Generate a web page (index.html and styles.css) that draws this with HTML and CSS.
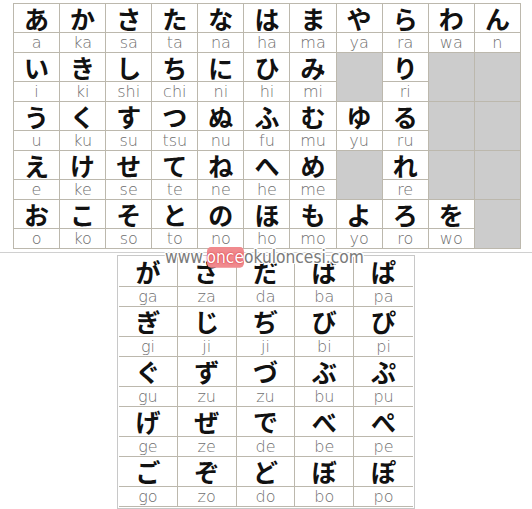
FILE: index.html
```html
<!DOCTYPE html>
<html lang="ja">
<head>
    <meta charset="UTF-8">
    <meta name="viewport" content="width=device-width, initial-scale=1.0">
    <title>Hiragana</title>
    <link rel="stylesheet" href="styles.css">
</head>
<body>
    <div class="top">
        <table class="chart main-chart">
            <tr class="kana">
                <td>あ</td><td>か</td><td>さ</td><td>た</td><td>な</td><td>は</td><td>ま</td><td>や</td><td>ら</td><td>わ</td><td>ん</td>
            </tr>
            <tr class="roma">
                <td>a</td><td>ka</td><td>sa</td><td>ta</td><td>na</td><td>ha</td><td>ma</td><td>ya</td><td>ra</td><td>wa</td><td>n</td>
            </tr>
            <tr class="kana">
                <td>い</td><td>き</td><td>し</td><td>ち</td><td>に</td><td>ひ</td><td>み</td><td class="empty" rowspan="2"></td><td>り</td><td class="empty" rowspan="2"></td><td class="empty" rowspan="2"></td>
            </tr>
            <tr class="roma">
                <td>i</td><td>ki</td><td>shi</td><td>chi</td><td>ni</td><td>hi</td><td>mi</td><td>ri</td>
            </tr>
            <tr class="kana">
                <td>う</td><td>く</td><td>す</td><td>つ</td><td>ぬ</td><td>ふ</td><td>む</td><td>ゆ</td><td>る</td><td class="empty" rowspan="2"></td><td class="empty" rowspan="2"></td>
            </tr>
            <tr class="roma">
                <td>u</td><td>ku</td><td>su</td><td>tsu</td><td>nu</td><td>fu</td><td>mu</td><td>yu</td><td>ru</td>
            </tr>
            <tr class="kana">
                <td>え</td><td>け</td><td>せ</td><td>て</td><td>ね</td><td>へ</td><td>め</td><td class="empty" rowspan="2"></td><td>れ</td><td class="empty" rowspan="2"></td><td class="empty" rowspan="2"></td>
            </tr>
            <tr class="roma">
                <td>e</td><td>ke</td><td>se</td><td>te</td><td>ne</td><td>he</td><td>me</td><td>re</td>
            </tr>
            <tr class="kana">
                <td>お</td><td>こ</td><td>そ</td><td>と</td><td>の</td><td>ほ</td><td>も</td><td>よ</td><td>ろ</td><td>を</td><td class="empty" rowspan="2"></td>
            </tr>
            <tr class="roma">
                <td>o</td><td>ko</td><td>so</td><td>to</td><td>no</td><td>ho</td><td>mo</td><td>yo</td><td>ro</td><td>wo</td>
            </tr>
        </table>
    </div>

    <div class="bottom">
        <table class="chart voiced-chart">
            <tr class="kana"><td>が</td><td>ざ</td><td>だ</td><td>ば</td><td>ぱ</td></tr>
            <tr class="roma"><td>ga</td><td>za</td><td>da</td><td>ba</td><td>pa</td></tr>
            <tr class="kana"><td>ぎ</td><td>じ</td><td>ぢ</td><td>び</td><td>ぴ</td></tr>
            <tr class="roma"><td>gi</td><td>ji</td><td>ji</td><td>bi</td><td>pi</td></tr>
            <tr class="kana"><td>ぐ</td><td>ず</td><td>づ</td><td>ぶ</td><td>ぷ</td></tr>
            <tr class="roma"><td>gu</td><td>zu</td><td>zu</td><td>bu</td><td>pu</td></tr>
            <tr class="kana"><td>げ</td><td>ぜ</td><td>で</td><td>べ</td><td>ぺ</td></tr>
            <tr class="roma"><td>ge</td><td>ze</td><td>de</td><td>be</td><td>pe</td></tr>
            <tr class="kana"><td>ご</td><td>ぞ</td><td>ど</td><td>ぼ</td><td>ぽ</td></tr>
            <tr class="roma"><td>go</td><td>zo</td><td>do</td><td>bo</td><td>po</td></tr>
        </table>
        <div class="watermark">www.<span class="hl">once</span>okuloncesi.com</div>
    </div>
</body>
</html>
```

FILE: styles.css
```css
body {
    margin: 0;
    padding: 0;
    background: #fff;
    width: 532px;
    height: 509px;
    overflow: hidden;
}

.top {
    padding: 3px 11px 0 13px;
    height: 253px;
    border-bottom: 1px solid #d0d0d0;
    box-sizing: border-box;
}

.chart {
    border-collapse: collapse;
    table-layout: fixed;
    text-align: center;
}

.chart td {
    border: 1px solid #bcb8ad;
    padding: 0;
    white-space: nowrap;
}

.main-chart {
    width: 508px;
}

.kana td {
    height: 28px;
    font-family: "Noto Sans CJK JP", sans-serif;
    font-weight: 700;
    font-size: 25px;
    line-height: 1;
    color: #111;
}

.roma td {
    height: 19px;
    font-family: "DejaVu Sans", Verdana, sans-serif;
    font-weight: 200;
    font-size: 16px;
    line-height: 1;
    color: #6f6f6f;
}

.chart td.empty {
    background: #cccccc;
}

.bottom {
    position: relative;
    padding: 2px 0 0 117px;
}

.voiced-chart {
    width: 298px;
    border: 1px solid #c8c8c8;
    border-collapse: separate;
    border-spacing: 0;
    padding: 1px;
}

.voiced-chart td {
    border-width: 0 1px 1px 0;
}

.voiced-chart tr td:last-child {
    border-right: 0;
}

.voiced-chart .kana td {
    height: 29px;
}

.voiced-chart .roma td {
    height: 19px;
}

.watermark {
    position: absolute;
    left: 165px;
    top: -6px;
    font-family: "DejaVu Sans", Verdana, sans-serif;
    font-size: 15.5px;
    color: #7a7a7a;
    transform: scaleY(1.15);
    transform-origin: left top;
    text-shadow: 1px 0 0 #fff, -1px 0 0 #fff, 0 1px 0 #fff, 0 -1px 0 #fff,
                 1px 1px 0 #fff, -1px -1px 0 #fff, 1px -1px 0 #fff, -1px 1px 0 #fff;
}

.watermark .hl {
    background: #f08a8e;
    color: #fff;
    border-radius: 4px;
    text-shadow: 0 0 2px #d9363e, 0 0 1px #d9363e;
}
```
